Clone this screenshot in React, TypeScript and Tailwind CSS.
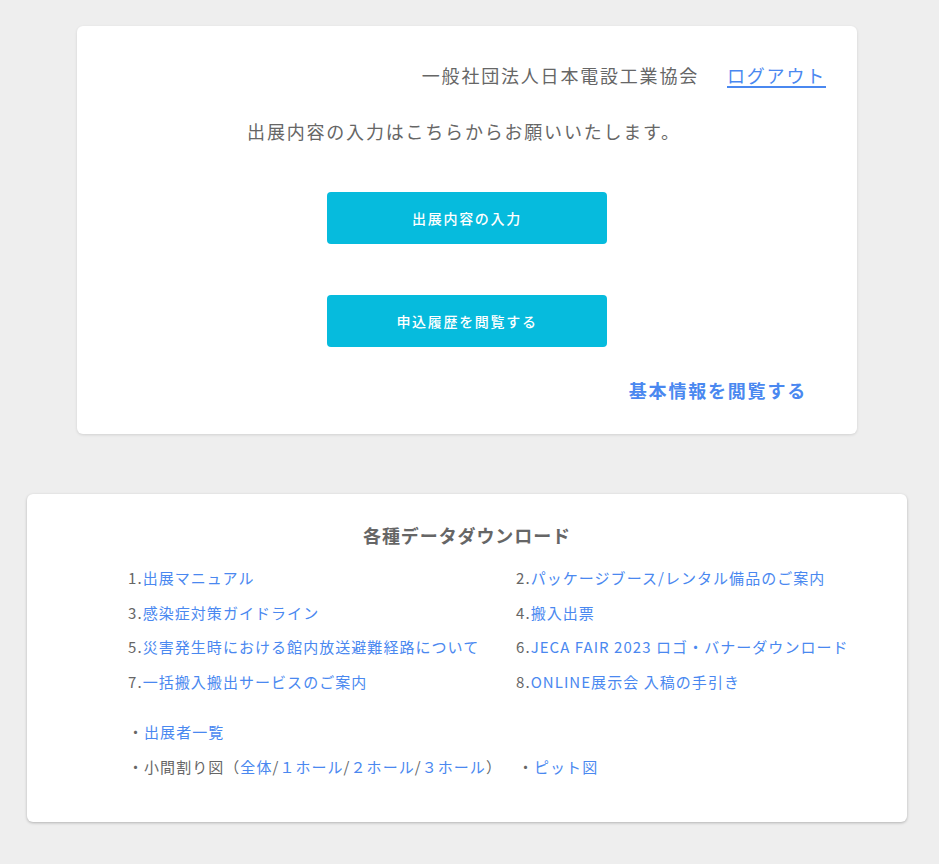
import React from "react";

const font = { fontFamily: '"Noto Sans CJK JP", "Noto Sans", sans-serif' };

function Item({ n, text }: { n: string; text: string }) {
  return (
    <div className="h-[34.5px] flex items-center">
      <span className="text-[#666666]">{n}.</span>
      <a className="text-[#4a88f0] cursor-pointer">{text}</a>
    </div>
  );
}

export default function App() {
  return (
    <div className="min-h-[864px] bg-[#eeeeee] pt-[26px] pb-[40px]" style={font}>
      <div className="ml-[77px] w-[780px] h-[408px] bg-white rounded-[6px] shadow-[0_1px_3px_rgba(0,0,0,0.12)] relative">
        <div className="flex justify-end items-center pt-[35px] pr-[31px] text-[18px] leading-[28px] tracking-[0.1em]">
          <span className="text-[#666666]">一般社団法人日本電設工業協会</span>
          <a className="ml-[28px] text-[#4a88f0] underline underline-offset-[3px] decoration-[1.5px] cursor-pointer">ログアウト</a>
        </div>
        <div className="mt-[28px] text-center pr-[6px] text-[18px] leading-[28px] tracking-[0.1em] text-[#666666]">
          出展内容の入力はこちらからお願いいたします。
        </div>
        <div className="flex flex-col items-center mt-[47px] gap-[51px]">
          <button className="w-[280px] h-[52px] rounded-[4px] bg-[#06bbdd] text-white text-[14px] font-medium tracking-[0.12em]">
            出展内容の入力
          </button>
          <button className="w-[280px] h-[52px] rounded-[4px] bg-[#06bbdd] text-white text-[14px] font-medium tracking-[0.12em]">
            申込履歴を閲覧する
          </button>
        </div>
        <div className="flex justify-end pr-[50px] mt-[29px]">
          <a className="text-[18px] leading-[28px] font-bold tracking-[0.1em] text-[#4a88f0] cursor-pointer">
            基本情報を閲覧する
          </a>
        </div>
      </div>

      <div className="ml-[27px] mt-[60px] w-[880px] h-[328px] bg-white rounded-[6px] shadow-[0_1px_3px_rgba(0,0,0,0.25)] pt-[27px]">
        <div className="text-center text-[18px] leading-[28px] font-bold tracking-[0.05em] text-[#666666]">
          各種データダウンロード
        </div>
        <div className="mt-[12px] ml-[101px] grid grid-cols-[388px_1fr] text-[15px] tracking-[0.07em]">
          <Item n="1" text="出展マニュアル" />
          <Item n="2" text="パッケージブース/レンタル備品のご案内" />
          <Item n="3" text="感染症対策ガイドライン" />
          <Item n="4" text="搬入出票" />
          <Item n="5" text="災害発生時における館内放送避難経路について" />
          <Item n="6" text="JECA FAIR 2023 ロゴ・バナーダウンロード" />
          <Item n="7" text="一括搬入搬出サービスのご案内" />
          <Item n="8" text="ONLINE展示会 入稿の手引き" />
        </div>
        <div className="mt-[16px] ml-[101px] text-[15px] tracking-[0.07em] text-[#666666]">
          <div className="h-[35px] flex items-center">
            <span>・</span>
            <a className="text-[#4a88f0] cursor-pointer">出展者一覧</a>
          </div>
          <div className="h-[35px] flex items-center">
            <span>・小間割り図（</span>
            <a className="text-[#4a88f0] cursor-pointer">全体</a>
            <span>/</span>
            <a className="text-[#4a88f0] cursor-pointer">１ホール</a>
            <span>/</span>
            <a className="text-[#4a88f0] cursor-pointer">２ホール</a>
            <span>/</span>
            <a className="text-[#4a88f0] cursor-pointer">３ホール</a>
            <span>）</span>
            <span className="ml-[16px]">・</span>
            <a className="text-[#4a88f0] cursor-pointer">ピット図</a>
          </div>
        </div>
      </div>
    </div>
  );
}
